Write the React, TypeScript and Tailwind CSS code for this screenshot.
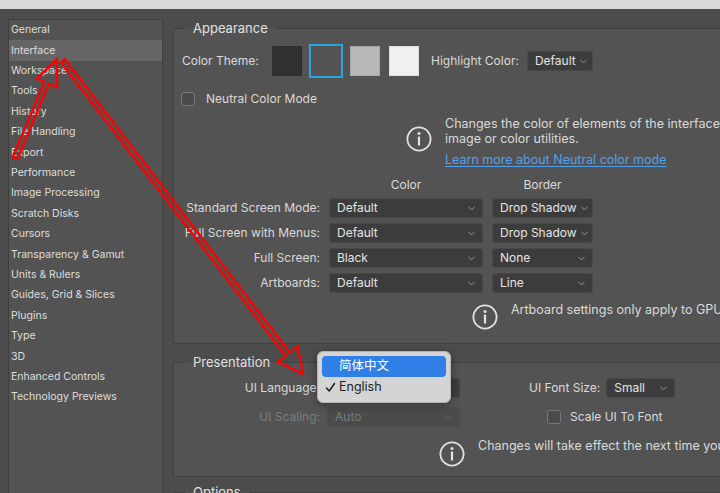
import { ChevronDown } from "lucide-react";
import clsx from "clsx";

const sections = [
  "General",
  "Interface",
  "Workspace",
  "Tools",
  "History",
  "File Handling",
  "Export",
  "Performance",
  "Image Processing",
  "Scratch Disks",
  "Cursors",
  "Transparency & Gamut",
  "Units & Rulers",
  "Guides, Grid & Slices",
  "Plugins",
  "Type",
  "3D",
  "Enhanced Controls",
  "Technology Previews",
];

function Select({ value, className, dim }: { value: string; className?: string; dim?: boolean }) {
  return (
    <div
      className={clsx(
        "flex h-[20px] items-center justify-between gap-[2px] whitespace-nowrap rounded-[3px] border pl-[7px] pr-[5px] text-[12px]",
        dim ? "border-[#4d4d4d] bg-[#4b4b4b] text-[#7a7a7a]" : "border-[#484848] bg-[#3c3c3c] text-[#e4e4e4]",
        className
      )}
    >
      <span>{value}</span>
      <ChevronDown size={11} strokeWidth={1.6} className={clsx("shrink-0", dim ? "text-[#6a6a6a]" : "text-[#b5b5b5]")} />
    </div>
  );
}

function InfoIcon() {
  return (
    <svg width="26" height="26" viewBox="0 0 26 26" className="shrink-0">
      <circle cx="13" cy="13" r="11.6" fill="none" stroke="#e2e2e2" strokeWidth="1.8" />
      <circle cx="13" cy="7.6" r="1.5" fill="#e2e2e2" />
      <rect x="11.9" y="10.6" width="2.2" height="9" rx="0.6" fill="#e2e2e2" />
    </svg>
  );
}

function Checkbox() {
  return <div className="h-[14px] w-[14px] shrink-0 rounded-[3px] border border-[#787878] bg-[#4a4a4a]" />;
}

function arrowPoints(tx: number, ty: number, hx: number, hy: number, w: number, hw: number, hl: number) {
  const dx = hx - tx;
  const dy = hy - ty;
  const len = Math.hypot(dx, dy);
  const ux = dx / len;
  const uy = dy / len;
  const nx = -uy;
  const ny = ux;
  const bx = hx - ux * hl;
  const by = hy - uy * hl;
  const pts = [
    [tx + (nx * w) / 2, ty + (ny * w) / 2],
    [bx + (nx * w) / 2, by + (ny * w) / 2],
    [bx + (nx * hw) / 2, by + (ny * hw) / 2],
    [hx, hy],
    [bx - (nx * hw) / 2, by - (ny * hw) / 2],
    [bx - (nx * w) / 2, by - (ny * w) / 2],
    [tx - (nx * w) / 2, ty - (ny * w) / 2],
  ];
  return pts.map((p) => p.map((v) => v.toFixed(1)).join(",")).join(" ");
}

function Arrows() {
  return (
    <svg className="pointer-events-none absolute left-0 top-0" width="720" height="493">
      <polygon
        points={arrowPoints(15, 158, 57, 59, 5, 22, 26)}
        fill="none"
        stroke="#ff0000"
        strokeWidth="2.4"
      />
      <polygon
        points={arrowPoints(63, 61, 303, 374, 5, 25, 25)}
        fill="none"
        stroke="#ff0000"
        strokeWidth="2.4"
      />
    </svg>
  );
}

function Sidebar() {
  return (
    <div className="mt-[-1px] h-[480px] w-[155px] shrink-0 border border-[#3f3f3f] bg-[#535353]">
      {sections.map((s) => (
        <div
          key={s}
          className={clsx(
            "flex h-[20.4px] items-center pl-[2px] text-[10.5px] text-[#dedede]",
            s === "Interface" && "bg-[#666666]"
          )}
        >
          {s}
        </div>
      ))}
    </div>
  );
}

export default function App() {
  return (
    <div className="relative h-[493px] w-[720px] overflow-hidden bg-[#4c4c4c] font-[Inter,'Noto_Sans_CJK_SC',sans-serif] text-[#dadada]">
      <div className="h-[9px] bg-[#d9d9d9]" />
      <div className="flex pl-2 pt-[11px]">
        <Sidebar />
        <div className="ml-[10px] flex w-[570px] shrink-0 flex-col">
          {/* Appearance */}
          <fieldset className="h-[324px] border border-[#414141] bg-[#535353]">
            <legend className="ml-[11px] px-[8px] text-[13px] leading-[16px] text-[#e0e0e0]">Appearance</legend>
            <div className="mt-[8px] flex h-[34px] items-center pl-2 text-[12px]">
              <span className="w-[88px]">Color Theme:</span>
              <div className="flex gap-[5px]">
                <div className="flex h-[34px] w-[34px] items-center justify-center border-2 border-transparent">
                  <div className="h-[30px] w-[30px] border border-[#2e2e2e] bg-[#313131]" />
                </div>
                <div className="flex h-[34px] w-[34px] items-center justify-center border-2 border-[#2aa4dc]">
                  <div className="h-[30px] w-[30px] bg-[#535353]" />
                </div>
                <div className="flex h-[34px] w-[34px] items-center justify-center border-2 border-transparent">
                  <div className="h-[30px] w-[30px] border border-[#a8a8a8] bg-[#b8b8b8]" />
                </div>
                <div className="flex h-[34px] w-[34px] items-center justify-center border-2 border-transparent">
                  <div className="h-[30px] w-[30px] border border-[#dedede] bg-[#f0f0f0]" />
                </div>
              </div>
              <span className="ml-[10px]">Highlight Color:</span>
              <Select value="Default" className="ml-[8px] w-[66px]" />
            </div>
            <div className="mt-[12px] flex items-center pl-[7px] text-[12px]">
              <Checkbox />
              <span className="ml-[11px]">Neutral Color Mode</span>
            </div>
            <div className="ml-[232px] mt-[8px] flex text-[12.5px] leading-[15px]">
              <div className="mt-[10px]">
                <InfoIcon />
              </div>
              <div className="ml-[13px] whitespace-nowrap">
                <div>Changes the color of elements of the interface, or</div>
                <div>image or color utilities.</div>
                <div className="mt-[6px] text-[#4ea2f0] underline underline-offset-2">
                  Learn more about Neutral color mode
                </div>
              </div>
            </div>
            <div className="mt-[10px] grid grid-cols-[146px_154px_101px] gap-x-[9px] gap-y-[5px] text-[12px]">
              <div className="h-[16px]" />
              <div className="h-[16px] text-center leading-[16px]">Color</div>
              <div className="h-[16px] text-center leading-[16px]">Border</div>
              <div className="flex h-[20px] items-center justify-end">Standard Screen Mode:</div>
              <Select value="Default" />
              <Select value="Drop Shadow" />
              <div className="flex h-[20px] items-center justify-end">Full Screen with Menus:</div>
              <Select value="Default" />
              <Select value="Drop Shadow" />
              <div className="flex h-[20px] items-center justify-end">Full Screen:</div>
              <Select value="Black" />
              <Select value="None" />
              <div className="flex h-[20px] items-center justify-end">Artboards:</div>
              <Select value="Default" />
              <Select value="Line" />
            </div>
            <div className="ml-[298px] mt-[11px] flex text-[12.5px] leading-[15px]">
              <InfoIcon />
              <span className="-mt-[2px] ml-[13px] whitespace-nowrap">Artboard settings only apply to GPU mode</span>
            </div>
          </fieldset>

          {/* Presentation */}
          <fieldset className="mt-[10px] h-[123px] border border-[#414141] bg-[#535353]">
            <legend className="ml-[11px] px-[8px] text-[13px] leading-[16px] text-[#e0e0e0]">Presentation</legend>
            <div className="mt-[8px] flex items-center text-[12px]">
              <span className="w-[146px] text-right">UI Language:</span>
              <div className="relative ml-[7px]">
                <Select value="English" className="w-[133px]" />
                <div className="absolute left-[-10px] top-[-27px] w-[134px] rounded-[6px] border border-[#b5b5b5] bg-[#d4d4d4] p-[4px] shadow-[0_2px_8px_rgba(0,0,0,0.35)]">
                  <div className="flex h-[21px] items-center rounded-[4px] bg-[#2f7fe6] pl-[17px] text-[12.5px] text-white">
                    简体中文
                  </div>
                  <div className="flex h-[21px] items-center pl-[3px] text-[12.5px] text-[#1e1e1e]">
                    <svg width="11" height="11" viewBox="0 0 11 11" className="mr-[3px]">
                      <path d="M1.5 6 L4.2 9 L9.5 1.5" fill="none" stroke="#1e1e1e" strokeWidth="1.5" strokeLinecap="round" strokeLinejoin="round" />
                    </svg>
                    English
                  </div>
                </div>
              </div>
              <span className="ml-[69px]">UI Font Size:</span>
              <Select value="Small" className="ml-[6px] w-[69px]" />
            </div>
            <div className="mt-[9px] flex items-center text-[12px]">
              <span className="w-[146px] text-right text-[#7d7d7d]">UI Scaling:</span>
              <Select value="Auto" dim className="ml-[7px] w-[133px]" />
              <div className="ml-[87px]">
                <Checkbox />
              </div>
              <span className="ml-[9px]">Scale UI To Font</span>
            </div>
            <div className="ml-[265px] mt-[14px] flex text-[12.5px] leading-[15px]">
              <InfoIcon />
              <span className="-mt-[3px] ml-[13px] whitespace-nowrap">Changes will take effect the next time you start</span>
            </div>
          </fieldset>

          {/* Options */}
          <fieldset className="mt-[7px] h-[80px] border border-[#414141] bg-[#535353]">
            <legend className="ml-[11px] px-[8px] text-[13px] leading-[16px] text-[#e0e0e0]">Options</legend>
          </fieldset>
        </div>
      </div>
      <Arrows />
    </div>
  );
}
